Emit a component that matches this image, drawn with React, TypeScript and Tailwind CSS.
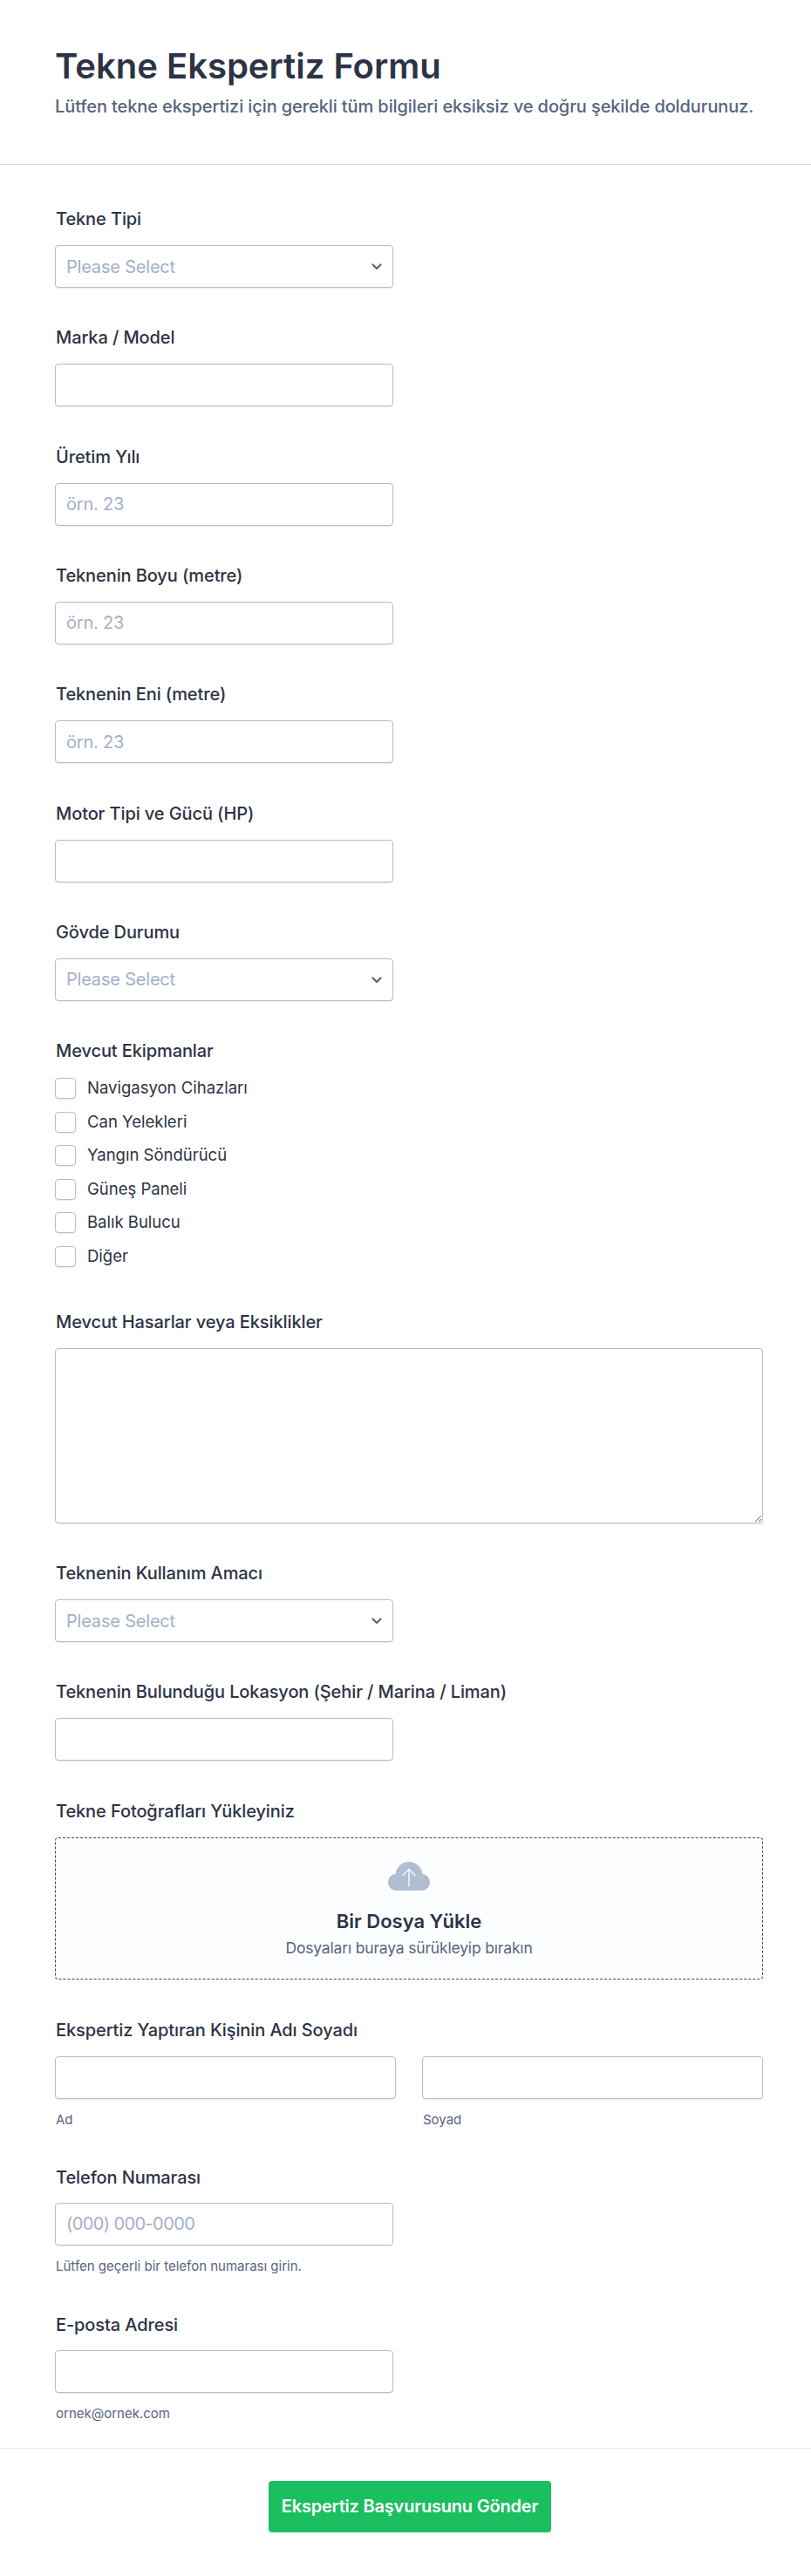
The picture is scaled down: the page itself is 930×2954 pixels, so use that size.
import { ReactNode } from "react";

const equipment = [
  "Navigasyon Cihazları",
  "Can Yelekleri",
  "Yangın Söndürücü",
  "Güneş Paneli",
  "Balık Bulucu",
  "Diğer",
];

const inputClass =
  "block h-[49px] w-full rounded-[4px] border border-[#b8bdc9] bg-white px-[12px] text-[20px] tracking-[-0.01em] text-[#2c3345] shadow-[0_1px_1px_rgba(184,189,201,0.3)] outline-none placeholder:text-[#a3b1c6]";

const labelClass =
  "block h-[24px] pl-[1px] text-[20px] font-medium leading-[24px] tracking-[-0.005em] text-[#2c3345]";

const Field = ({ label, children }: { label: string; children: ReactNode }) => (
  <div className="mb-[45.33px]">
    <label className={`${labelClass} mb-[18px]`}>{label}</label>
    {children}
  </div>
);

const SelectBox = () => (
  <div className="relative w-[388px]">
    <select className={`${inputClass} appearance-none text-[#a3b1c6]`} defaultValue="">
      <option value="">Please Select</option>
    </select>
    <svg
      className="pointer-events-none absolute right-[12px] top-[20px] h-[10px] w-[14px]"
      viewBox="0 0 14 10"
      fill="none"
      stroke="#57647e"
      strokeWidth="2.2"
      strokeLinecap="round"
      strokeLinejoin="round"
    >
      <path d="M2.5 2.5 7 7l4.5-4.5" />
    </svg>
  </div>
);

const TextBox = ({ placeholder, extra = "" }: { placeholder?: string; extra?: string }) => (
  <div className="w-[388px]">
    <input type="text" placeholder={placeholder} className={`${inputClass} ${extra}`} />
  </div>
);

const Hint = ({ children }: { children: ReactNode }) => (
  <p className="mt-[15px] h-[18px] pl-[1px] text-[15px] leading-[18px] text-[#57647e]">{children}</p>
);

export default function App() {
  return (
    <div className="min-h-[2954px] bg-white font-['Inter',sans-serif]">
      <header className="h-[189px] border-b border-[#d8dae3] pl-[63px] pr-[55px] pt-[50px]">
        <h1 className="text-[40px] font-semibold leading-[52px] text-[#2c3345]">Tekne Ekspertiz Formu</h1>
        <p className="mt-[6px] text-[20px] font-medium leading-[28px] tracking-[-0.005em] text-[#57647e]">
          Lütfen tekne ekspertizi için gerekli tüm bilgileri eksiksiz ve doğru şekilde doldurunuz.
        </p>
      </header>

      <main className="pl-[63px] pr-[55px] pt-[50px]">
        <Field label="Tekne Tipi">
          <SelectBox />
        </Field>
        <Field label="Marka / Model">
          <TextBox />
        </Field>
        <Field label="Üretim Yılı">
          <TextBox placeholder="örn. 23" />
        </Field>
        <Field label="Teknenin Boyu (metre)">
          <TextBox placeholder="örn. 23" />
        </Field>
        <Field label="Teknenin Eni (metre)">
          <TextBox placeholder="örn. 23" />
        </Field>
        <Field label="Motor Tipi ve Gücü (HP)">
          <TextBox />
        </Field>
        <Field label="Gövde Durumu">
          <SelectBox />
        </Field>

        <div className="mb-[51px]">
          <label className={`${labelClass} mb-[19px]`}>Mevcut Ekipmanlar</label>
          <div className="flex flex-col gap-[14.5px]">
            {equipment.map((item) => (
              <label key={item} className="flex h-[24px] items-center gap-[13px] text-[18.5px] text-[#2c3345]">
                <input
                  type="checkbox"
                  className="h-[24px] w-[24px] appearance-none rounded-[4px] border border-[#b8bdc9] bg-white shadow-[0_1px_1px_rgba(184,189,201,0.3)]"
                />
                {item}
              </label>
            ))}
          </div>
        </div>

        <Field label="Mevcut Hasarlar veya Eksiklikler">
          <textarea className="block h-[201px] w-full rounded-[4px] border border-[#b8bdc9] bg-white shadow-[0_1px_1px_rgba(184,189,201,0.3)] outline-none" />
        </Field>
        <Field label="Teknenin Kullanım Amacı">
          <SelectBox />
        </Field>
        <Field label="Teknenin Bulunduğu Lokasyon (Şehir / Marina / Liman)">
          <TextBox />
        </Field>

        <div className="mb-[46px]">
          <label className={`${labelClass} mb-[18px]`}>Tekne Fotoğrafları Yükleyiniz</label>
          <div className="flex h-[163px] flex-col items-center rounded-[4px] border border-dashed border-[#3d4560] bg-[#fcfdff] pt-[27px]">
            <svg className="h-[33px] w-[48px]" viewBox="0 0 48 33" fill="none">
              <path
                d="M10 33C4.500 33 0 29 0 23.500 0 18.500 3.700 14.600 8.500 14 9.500 6 16 0 24 0s14.500 6 15.500 14C44.300 14.600 48 18.500 48 23.500 48 29 43.500 33 38 33H10Z"
                fill="#b1bdd1"
              />
              <path
                d="M24 28V9M17 15.500 24 8.500l7 7"
                stroke="#fbfcff"
                strokeWidth="1.400"
                strokeLinecap="round"
                strokeLinejoin="round"
              />
            </svg>
            <div className="mt-[21px] text-[22px] font-semibold leading-[28px] text-[#2c3345]">Bir Dosya Yükle</div>
            <div className="mt-[6px] text-[17.5px] leading-[22px] tracking-[-0.01em] text-[#57647e]">
              Dosyaları buraya sürükleyip bırakın
            </div>
          </div>
        </div>

        <div className="mb-[45px]">
          <label className={`${labelClass} mb-[18px]`}>Ekspertiz Yaptıran Kişinin Adı Soyadı</label>
          <div className="grid grid-cols-2 gap-[30px]">
            <div>
              <input type="text" className={inputClass} />
              <Hint>Ad</Hint>
            </div>
            <div>
              <input type="text" className={inputClass} />
              <Hint>Soyad</Hint>
            </div>
          </div>
        </div>

        <div className="mb-[46px]">
          <label className={`${labelClass} mb-[17px]`}>Telefon Numarası</label>
          <TextBox placeholder="(000) 000-0000" extra="placeholder:tracking-[-0.03em]" />
          <Hint>Lütfen geçerli bir telefon numarası girin.</Hint>
        </div>

        <div>
          <label className={`${labelClass} mb-[17px]`}>E-posta Adresi</label>
          <TextBox />
          <Hint>ornek@ornek.com</Hint>
        </div>
      </main>

      <footer className="mt-[30px] flex justify-center border-t border-[#e8e9ee] pl-[10px] pt-[37px]">
        <button
          type="button"
          className="h-[59px] w-[324px] rounded-[4px] bg-[#1bbf5f] text-[20px] font-semibold tracking-[-0.01em] text-white"
        >
          Ekspertiz Başvurusunu Gönder
        </button>
      </footer>
    </div>
  );
}
